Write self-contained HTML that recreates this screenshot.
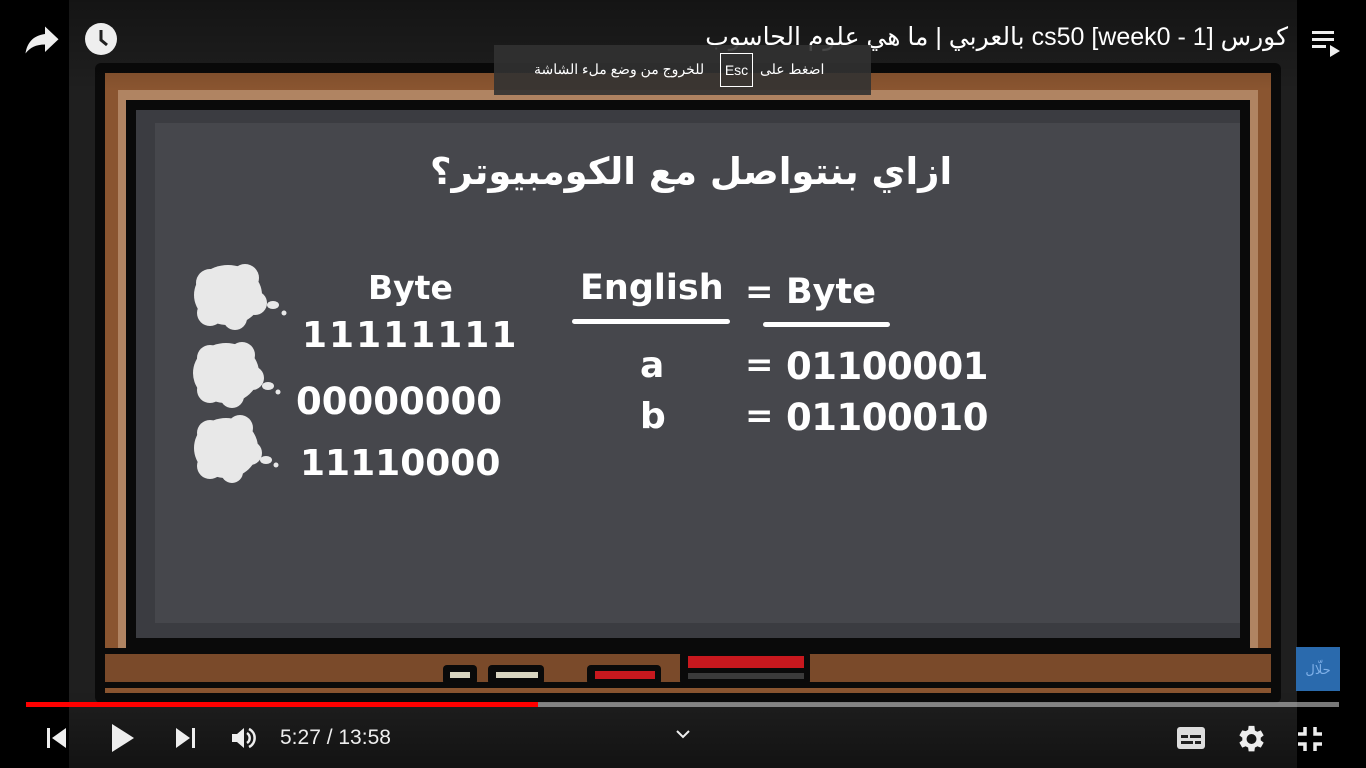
<!DOCTYPE html>
<html><head><meta charset="utf-8"><style>
*{margin:0;padding:0;box-sizing:border-box}
body{width:1366px;height:768px;background:#000;position:relative;overflow:hidden;font-family:"Liberation Sans","Noto Sans CJK SC",sans-serif}
.a{position:absolute}
.t{color:#fff;font-weight:bold;font-family:"DejaVu Sans","Liberation Sans",sans-serif;white-space:nowrap}
</style></head><body>
<div class="a" style="left:69px;top:0;width:1228px;height:768px;background:#1f1f1f"></div>
<!-- frame -->
<div class="a" style="left:95px;top:63px;width:1186px;height:640px;background:#0a0a0a;border-radius:6px"></div>
<div class="a" style="left:105px;top:73px;width:1166px;height:620px;background:#8a5530"></div>
<div class="a" style="left:118px;top:90px;width:1140px;height:590px;background:#b08462"></div>
<div class="a" style="left:126px;top:100px;width:1124px;height:548px;background:#0a0a0a"></div>
<div class="a" style="left:136px;top:110px;width:1104px;height:528px;background:#3b3c41"></div>
<div class="a" style="left:155px;top:123px;width:1085px;height:500px;background:#46474c"></div>
<div class="a" style="left:105px;top:648px;width:1166px;height:40px;background:#7a4a2a;border-top:6px solid #0a0a0a;border-bottom:6px solid #0a0a0a"></div>
<div class="a" style="left:443px;top:665px;width:34px;height:20px;background:#0a0a0a;border-radius:4px"></div>
<div class="a" style="left:450px;top:672px;width:20px;height:6px;background:#d8d4c0"></div>
<div class="a" style="left:488px;top:665px;width:56px;height:20px;background:#0a0a0a;border-radius:4px"></div>
<div class="a" style="left:496px;top:672px;width:42px;height:6px;background:#d8d4c0"></div>
<div class="a" style="left:587px;top:665px;width:74px;height:20px;background:#0a0a0a;border-radius:4px"></div>
<div class="a" style="left:595px;top:671px;width:60px;height:8px;background:#c8181e"></div>
<div class="a" style="left:680px;top:651px;width:130px;height:34px;background:#0a0a0a;border-radius:4px"></div>
<div class="a" style="left:688px;top:656px;width:116px;height:12px;background:#c8181e"></div>
<div class="a" style="left:688px;top:673px;width:116px;height:6px;background:#3a3a3a"></div>
<!-- board content -->
<div class="a t" style="left:430px;top:150px;font-size:37px;font-family:'DejaVu Sans','Noto Sans CJK SC',sans-serif">ازاي بنتواصل مع الكومبيوتر؟</div>
<div class="a t" style="left:368px;top:268px;font-size:33px">Byte</div>
<div class="a t" style="left:302px;top:315px;font-size:36px;letter-spacing:2px">11111111</div>
<div class="a t" style="left:296px;top:380px;font-size:37px;letter-spacing:0px">00000000</div>
<div class="a t" style="left:300px;top:443px;font-size:36px;letter-spacing:0px">11110000</div>
<div class="a t" style="left:580px;top:268px;font-size:35px">English</div>
<div class="a" style="left:572px;top:319px;width:158px;height:5px;background:#fff;border-radius:3px"></div>
<div class="a t" style="left:745px;top:272px;font-size:34px">=</div>
<div class="a t" style="left:786px;top:272px;font-size:35px">Byte</div>
<div class="a" style="left:763px;top:322px;width:127px;height:5px;background:#fff;border-radius:3px"></div>
<div class="a t" style="left:640px;top:345px;font-size:36px">a</div>
<div class="a t" style="left:745px;top:345px;font-size:34px">=</div>
<div class="a t" style="left:786px;top:345px;font-size:37px;letter-spacing:-0.5px">01100001</div>
<div class="a t" style="left:640px;top:396px;font-size:36px">b</div>
<div class="a t" style="left:745px;top:396px;font-size:34px">=</div>
<div class="a t" style="left:786px;top:396px;font-size:37px;letter-spacing:-0.5px">01100010</div>
<!-- clouds -->
<svg class="a" style="left:190px;top:258px" width="100" height="230" viewBox="0 0 100 230">
<g fill="#e8e8e8">
<ellipse cx="38" cy="37" rx="34" ry="30"/><circle cx="20" cy="25" r="14"/><circle cx="55" cy="20" r="14"/><circle cx="65" cy="45" r="12"/><circle cx="20" cy="55" r="13"/><circle cx="45" cy="60" r="12"/>
<ellipse cx="83" cy="47" rx="6" ry="4"/><circle cx="94" cy="55" r="2.5"/>
<ellipse cx="36" cy="115" rx="33" ry="30"/><circle cx="20" cy="100" r="13"/><circle cx="52" cy="97" r="13"/><circle cx="62" cy="120" r="12"/><circle cx="20" cy="132" r="13"/><circle cx="42" cy="138" r="12"/>
<ellipse cx="78" cy="128" rx="6" ry="4"/><circle cx="88" cy="134" r="2.5"/>
<ellipse cx="36" cy="190" rx="32" ry="30"/><circle cx="20" cy="175" r="13"/><circle cx="50" cy="170" r="13"/><circle cx="60" cy="195" r="12"/><circle cx="20" cy="208" r="13"/><circle cx="42" cy="214" r="11"/>
<ellipse cx="76" cy="202" rx="6" ry="4"/><circle cx="86" cy="207" r="2.5"/>
</g></svg>
<!-- top overlay -->
<div class="a" style="left:0;top:0;width:1366px;height:90px;background:linear-gradient(rgba(0,0,0,.35),rgba(0,0,0,0))"></div>
<svg class="a" style="left:24px;top:25px" width="36" height="30" viewBox="0 0 24 20"><path d="M14 1v5C6 7 2 12 1 19c3-4 7-6 13-6v5l9-8.5z" fill="#eee"/></svg>
<svg class="a" style="left:84px;top:22px" width="34" height="34" viewBox="0 0 34 34"><circle cx="17" cy="17" r="16" fill="#eee"/><path d="M17 8v10l6 5" stroke="#1f1f1f" stroke-width="3" fill="none"/></svg>
<div class="a" style="right:78px;top:22px;color:#fff;font-size:25px;direction:rtl;white-space:nowrap;font-family:'Liberation Sans','Noto Sans CJK SC',sans-serif">كورس [week0 - 1] cs50 بالعربي | ما هي علوم الحاسوب</div>
<svg class="a" style="left:1310px;top:28px" width="32" height="30" viewBox="0 0 32 30"><rect x="2" y="3" width="22" height="3" fill="#eee"/><rect x="2" y="10" width="22" height="3" fill="#eee"/><rect x="2" y="17" width="14" height="3" fill="#eee"/><path d="M20 17l10 6-10 6z" fill="#eee"/></svg>
<div class="a" style="left:494px;top:45px;width:377px;height:50px;background:rgba(50,50,50,.9)"></div>
<div class="a" style="left:534px;top:61px;color:#fff;font-size:14px;white-space:nowrap;font-family:'Liberation Sans','Noto Sans CJK SC',sans-serif">للخروج من وضع ملء الشاشة</div>
<div class="a" style="left:720px;top:53px;width:33px;height:34px;border:1px solid #fff;color:#fff;font-size:14px;text-align:center;line-height:32px">Esc</div>
<div class="a" style="left:760px;top:61px;color:#fff;font-size:14px;white-space:nowrap;font-family:'Liberation Sans','Noto Sans CJK SC',sans-serif">اضغط على</div>
<!-- watermark -->
<div class="a" style="left:1296px;top:647px;width:44px;height:44px;background:#2a6aad;color:#7fb0e8;font-size:13px;text-align:center;line-height:44px;font-family:'Noto Sans CJK SC',sans-serif">حلّال</div>
<!-- bottom -->
<div class="a" style="left:0;top:690px;width:1366px;height:78px;background:linear-gradient(rgba(0,0,0,0),rgba(0,0,0,.4))"></div>
<div class="a" style="left:26px;top:702px;width:1313px;height:5px;background:rgba(200,200,200,.6)"></div>
<div class="a" style="left:26px;top:702px;width:512px;height:5px;background:#f00"></div>
<svg class="a" style="left:44px;top:726px" width="26" height="24" viewBox="0 0 26 24"><rect x="3" y="2" width="3" height="20" fill="#eee"/><path d="M22 2v20L8 12z" fill="#eee"/></svg>
<svg class="a" style="left:108px;top:722px" width="30" height="32" viewBox="0 0 30 32"><path d="M4 2l22 14L4 30z" fill="#eee"/></svg>
<svg class="a" style="left:172px;top:726px" width="26" height="24" viewBox="0 0 26 24"><path d="M4 2v20l14-10z" fill="#eee"/><rect x="20" y="2" width="3" height="20" fill="#eee"/></svg>
<svg class="a" style="left:230px;top:725px" width="28" height="26" viewBox="0 0 28 26"><path d="M2 9h5l7-6v20l-7-6H2z" fill="#eee"/><path d="M17 8a6 6 0 0 1 0 10M19 4a10 10 0 0 1 0 18" stroke="#eee" stroke-width="2.5" fill="none"/></svg>
<div class="a" style="left:280px;top:726px;color:#eee;font-size:21px">5:27 / 13:58</div>
<svg class="a" style="left:675px;top:729px" width="16" height="12" viewBox="0 0 16 12"><path d="M2 2l6 6 6-6" stroke="#eee" stroke-width="2" fill="none"/></svg>
<svg class="a" style="left:1176px;top:726px" width="30" height="24" viewBox="0 0 30 24"><rect x="1" y="1" width="28" height="22" rx="3" fill="#ddd"/><rect x="5" y="9" width="7" height="3" fill="#1f1f1f"/><rect x="14" y="9" width="11" height="3" fill="#1f1f1f"/><rect x="5" y="15" width="12" height="3" fill="#1f1f1f"/><rect x="19" y="15" width="6" height="3" fill="#1f1f1f"/></svg>
<svg class="a" style="left:1234px;top:722px" width="34" height="34" viewBox="0 0 26 26"><path fill="#eee" d="M20.4 14a7.5 7.5 0 0 0 0-2l2.3-1.8-2.2-3.8-2.7 1.1a7 7 0 0 0-1.8-1L15.6 3h-4.4l-.4 3a7 7 0 0 0-1.8 1L6.3 6.4 4.1 10.2 6.4 12a7.5 7.5 0 0 0 0 2l-2.3 1.8 2.2 3.8 2.7-1.1a7 7 0 0 0 1.8 1l.4 3h4.4l.4-3a7 7 0 0 0 1.8-1l2.7 1.1 2.2-3.8zM13.4 16.8a3.8 3.8 0 1 1 0-7.6 3.8 3.8 0 0 1 0 7.6z"/></svg>
<svg class="a" style="left:1296px;top:725px" width="28" height="28" viewBox="0 0 28 28"><path d="M9 2v7H2M19 2v7h7M9 26v-7H2M19 26v-7h7" stroke="#eee" stroke-width="3.5" fill="none"/></svg>
</body></html>
